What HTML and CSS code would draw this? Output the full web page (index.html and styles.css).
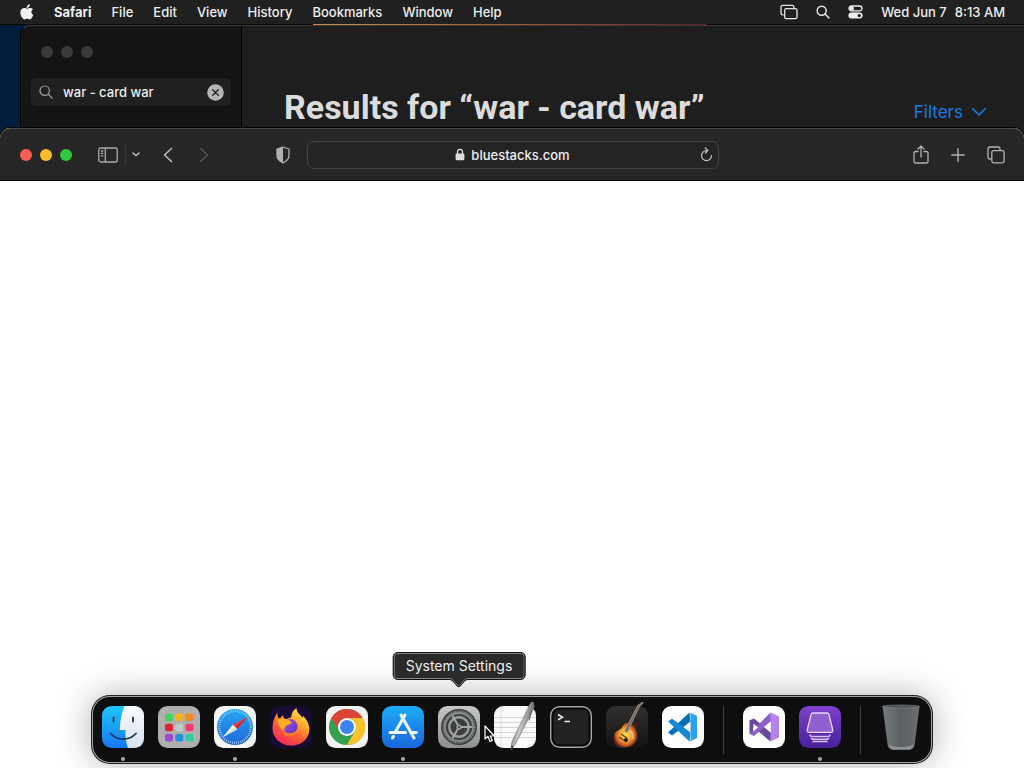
FILE: index.html
```html
<!DOCTYPE html>
<html lang="en">
<head>
<meta charset="utf-8">
<meta name="viewport" content="width=device-width, initial-scale=1">
<title>bluestacks.com</title>
<link rel="stylesheet" href="styles.css">
</head>
<body>
<div class="desktop">
  <header class="menubar">
    <nav class="menus" aria-label="Menu bar">
      <button class="menu apple" aria-label="Apple">
        <svg width="14" height="16" viewBox="0 0 14 16"><path fill="#f0f0f0" d="M9.9 0.2c.1 1-.3 1.900-.9 2.600-.6.700-1.500 1.200-2.400 1.100-.1-.9.400-1.900.9-2.500C8.100.700 9.100.200 9.900.200zM12.900 5.400c-.9.600-1.500 1.400-1.500 2.500 0 1.300.8 2.400 2 2.900-.3.900-.7 1.700-1.200 2.500-.7 1-1.400 2.100-2.500 2.100-1 0-1.400-.6-2.600-.6s-1.600.6-2.600.6c-1.100 0-1.900-1.100-2.600-2.100C.5 11.300-.3 7.700 1.300 5.600c.7-1 1.800-1.600 3-1.600 1.200 0 2 .7 2.900.7s1.500-.7 2.900-.7c1.100 0 2.100.5 2.800 1.400z"/></svg>
      </button>
      <button class="menu current">Safari</button>
      <button class="menu">File</button>
      <button class="menu">Edit</button>
      <button class="menu">View</button>
      <button class="menu">History</button>
      <button class="menu">Bookmarks</button>
      <button class="menu">Window</button>
      <button class="menu">Help</button>
    </nav>
    <div class="status">
      <button class="menu" aria-label="Stage Manager">
        <svg width="18" height="16" viewBox="0 0 18 16" fill="none" stroke="#e6e6e6" stroke-width="1.300"><path d="M3.600 10.800H2.700A1.700 1.700 0 0 1 1 9.100V3a1.700 1.700 0 0 1 1.700-1.700h9.500A1.700 1.700 0 0 1 13.900 3v1"/><rect x="4.700" y="4.600" width="12.300" height="10" rx="1.700"/></svg>
      </button>
      <button class="menu" aria-label="Spotlight">
        <svg width="14" height="14" viewBox="0 0 14 14" fill="none" stroke="#e6e6e6" stroke-width="1.500" stroke-linecap="round"><circle cx="5.700" cy="5.700" r="4.500"/><path d="M9 9l4 4"/></svg>
      </button>
      <button class="menu" aria-label="Control Center">
        <svg width="15" height="14" viewBox="0 0 15 14"><rect x="1" y="1" width="13" height="4.800" rx="2.400" fill="none" stroke="#eee" stroke-width="1.300"/><circle cx="3.800" cy="3.400" r="2.200" fill="#eee"/><rect x=".4" y="7.600" width="14.200" height="6" rx="3" fill="#eee"/><circle cx="11.300" cy="10.600" r="1.700" fill="#222"/></svg>
      </button>
      <time class="clock" datetime="2023-06-07T08:13"><span>Wed Jun 7</span><span>8:13 AM</span></time>
    </div>
  </header>

  <section class="store" aria-label="App Store">
    <aside class="store-side">
      <div class="lights idle"><i></i><i></i><i></i></div>
      <div class="search">
        <svg width="14" height="14" viewBox="0 0 14 14" fill="none" stroke="#a0a0a0" stroke-width="1.200" stroke-linecap="round"><circle cx="5.700" cy="5.700" r="4.700"/><path d="M9.200 9.200l4 4"/></svg>
        <input type="text" value="war - card war" aria-label="Search">
        <button class="clear" aria-label="Clear search">
          <svg width="17" height="17" viewBox="0 0 17 17"><circle cx="8.500" cy="8.500" r="8.300" fill="#b4b4b4"/><path d="M5.700 5.700l5.600 5.600M11.300 5.700l-5.600 5.600" stroke="#1c1c1c" stroke-width="1.300" stroke-linecap="round"/></svg>
        </button>
      </div>
    </aside>
    <div class="store-main">
      <h1>Results for “war - card war”</h1>
      <button class="filters">Filters
        <svg width="16" height="10" viewBox="0 0 16 10" fill="none" stroke="#1a7be8" stroke-width="1.600" stroke-linecap="round" stroke-linejoin="round"><path d="M1.500 1.500L8 8l6.500-6.500"/></svg>
      </button>
    </div>
  </section>

  <main class="browser">
    <div class="toolbar">
      <div class="tools">
        <div class="lights"><i class="red"></i><i class="yellow"></i><i class="green"></i></div>
        <div class="sidebar-tools">
          <button aria-label="Show sidebar">
            <svg width="20" height="16" viewBox="0 0 20 16" fill="none" stroke="#aaa" stroke-width="1.300"><rect x=".8" y="1" width="18.400" height="14" rx="2"/><path d="M7.300 1v14M2.800 4h2.500M2.800 6.400h2.500M2.800 8.800h2.500"/></svg>
          </button>
          <button class="chooser" aria-label="Tab groups">
            <svg width="8" height="5" viewBox="0 0 8 5" fill="none" stroke="#c4c4c4" stroke-width="1.500" stroke-linecap="round" stroke-linejoin="round"><path d="M1 1l3 2.500L7 1"/></svg>
          </button>
        </div>
        <div class="history">
          <button aria-label="Back"><svg width="10" height="16" viewBox="0 0 10 16" fill="none" stroke="#c0c0c0" stroke-width="1.500" stroke-linecap="round" stroke-linejoin="round"><path d="M8.500 1.500L1.500 8l7 6.500"/></svg></button>
          <button aria-label="Forward" disabled><svg width="10" height="16" viewBox="0 0 10 16" fill="none" stroke="#545454" stroke-width="1.500" stroke-linecap="round" stroke-linejoin="round"><path d="M1.500 1.500l7 6.500-7 6.500"/></svg></button>
        </div>
        <button class="shield" aria-label="Privacy report">
          <svg width="16" height="18" viewBox="0 0 16 18"><path d="M8 1l6 2v6.500c0 3.500-2.500 5.600-6 7.300-3.500-1.700-6-3.800-6-7.300V3z" fill="none" stroke="#b0b0b0" stroke-width="1.300" stroke-linejoin="round"/><path d="M8 1L2 3v6.500c0 3.500 2.500 5.600 6 7.300z" fill="#b0b0b0"/></svg>
        </button>
      </div>
      <div class="address">
        <button class="site">
          <svg width="10" height="13" viewBox="0 0 10 13"><path d="M2.500 6V3.800a2.500 2.500 0 0 1 5 0V6" fill="none" stroke="#ddd" stroke-width="1.300"/><rect x=".6" y="5.400" width="8.800" height="6.800" rx="1.200" fill="#ddd"/></svg>
          bluestacks.com
        </button>
        <button class="reload" aria-label="Reload">
          <svg width="14" height="15" viewBox="0 0 14 15" fill="none" stroke="#c0c0c0" stroke-width="1.200" stroke-linecap="round" stroke-linejoin="round"><path d="M8.500 3.600H7.500A5 5 0 1 0 12.500 8.600M6.300 1l2.600 2.600-2.600 2.600"/></svg>
        </button>
      </div>
      <div class="tools end">
        <button aria-label="Share"><svg width="16" height="20" viewBox="0 0 16 20" fill="none" stroke="#b2b2b2" stroke-width="1.300" stroke-linecap="round" stroke-linejoin="round"><path d="M5 6.500H2.500a1.500 1.500 0 0 0-1.500 1.500v8.500A1.500 1.500 0 0 0 2.500 18h11a1.500 1.500 0 0 0 1.500-1.500V8a1.500 1.500 0 0 0-1.500-1.500H11M8 12V1.200M5 4l3-3 3 3"/></svg></button>
        <button aria-label="New tab"><svg width="14" height="14" viewBox="0 0 14 14" stroke="#b2b2b2" stroke-width="1.400" stroke-linecap="round"><path d="M7 .8v12.400M.8 7h12.400"/></svg></button>
        <button aria-label="Show tabs"><svg width="18" height="18" viewBox="0 0 18 18" fill="none" stroke="#b2b2b2" stroke-width="1.300"><path d="M4.500 13H2.800A1.800 1.800 0 0 1 1 11.200V2.800A1.800 1.800 0 0 1 2.800 1h8.400A1.800 1.800 0 0 1 13 2.800v1.700"/><rect x="4.800" y="4.600" width="12.300" height="12.300" rx="1.800"/></svg></button>
      </div>
    </div>
    <div class="page"></div>
  </main>

  <nav class="dock" aria-label="Dock">
    <button class="app running" aria-label="Finder">
      <svg viewBox="0 0 42 42"><defs><linearGradient id="fb" x2="0" y2="1"><stop stop-color="#20c7fb"/><stop offset="1" stop-color="#1677f3"/></linearGradient><linearGradient id="fw" x2="0" y2="1"><stop stop-color="#fafafc"/><stop offset="1" stop-color="#d9e1ee"/></linearGradient><clipPath id="tile"><rect width="42" height="42" rx="9.500"/></clipPath></defs><g clip-path="url(#tile)"><path fill="url(#fb)" d="M0 0h42v42H0z"/><path fill="url(#fw)" d="M42 0H22.500C19.500 7 18 15 17.800 24h5.700c-.4 6 .3 12 2.500 18h16z"/></g><path d="M11.500 11.500v4M31 11.500v4" stroke="#153250" stroke-width="1.800" stroke-linecap="round"/><path d="M8.500 27.500c7 7.500 18.500 7.500 25.500 0" fill="none" stroke="#183a5c" stroke-width="1.800" stroke-linecap="round"/></svg>
    </button>
    <button class="app" aria-label="Launchpad">
      <svg viewBox="0 0 42 42"><rect width="42" height="42" rx="9.500" fill="#afafaf"/><rect x="7" y="7.500" width="8" height="7.500" rx="1.800" fill="#48d258"/><rect x="17.300" y="7.500" width="8" height="7.500" rx="1.800" fill="#f7b321"/><rect x="27.500" y="7.500" width="8" height="7.500" rx="1.800" fill="#f28a22"/><rect x="7" y="17.700" width="8" height="7.500" rx="1.800" fill="#dc2536"/><rect x="17.300" y="17.700" width="8" height="7.500" rx="1.800" fill="#b9ccc9"/><rect x="27.500" y="17.700" width="8" height="7.500" rx="1.800" fill="#f43b72"/><rect x="7" y="28" width="8" height="7.500" rx="1.800" fill="#9e48d0"/><rect x="17.300" y="28" width="8" height="7.500" rx="1.800" fill="#258fdf"/><rect x="27.500" y="28" width="8" height="7.500" rx="1.800" fill="#36c9a6"/></svg>
    </button>
    <button class="app running" aria-label="Safari">
      <svg viewBox="0 0 42 42"><defs><linearGradient id="sf" x2="0" y2="1"><stop stop-color="#25a8f4"/><stop offset="1" stop-color="#2167d8"/></linearGradient></defs><rect width="42" height="42" rx="9.500" fill="#f5f5f5"/><circle cx="21" cy="21" r="18" fill="url(#sf)"/><circle cx="21" cy="21" r="15.800" fill="none" stroke="#c9e4fb" stroke-width="2" stroke-dasharray=".7 1.368"/><path fill="#f13c3a" d="M33.500 11L18.800 18.800l4.400 4.400z"/><path fill="#c22f3a" d="M33.500 11L21 21l2.200 2.200z"/><path fill="#fff" d="M8.800 31.200L18.800 18.800l4.400 4.400z"/><path fill="#d4dbe4" d="M8.800 31.200L21 21l2.200 2.200z"/></svg>
    </button>
    <button class="app" aria-label="Firefox">
      <svg viewBox="0 0 42 42"><defs><linearGradient id="ff" x1=".85" y1="0" x2=".25" y2="1"><stop stop-color="#fff04c"/><stop offset=".35" stop-color="#ffac28"/><stop offset=".65" stop-color="#ff5a38"/><stop offset="1" stop-color="#ee2664"/></linearGradient><linearGradient id="ff2" x2="1" y2="1"><stop stop-color="#b050ec"/><stop offset="1" stop-color="#5436b4"/></linearGradient></defs><rect width="42" height="42" rx="9.500" fill="#1a0b35"/><path fill="url(#ff)" d="M7.500 6.500c-.3 2.500.1 4 .9 5.500l1.800.2L13 9c.2 2.500 1 3.900 2.800 4.600 1.600-1.300 3.200-2 5.200-2.200.6-4.300 2.400-7.500 5.500-9.400.2 4.200 2.400 5.800 4.500 7.800l1.500 2 .5-2c5.700 5.700 8 12.700 5.300 19.100C35.600 35.500 29 39.500 21 39.500 10.500 39.500 2.500 32 2.500 22c0-6 2-11.700 5-15.500z"/><circle cx="20" cy="20.500" r="7.500" fill="url(#ff2)"/><path fill="#ffac24" d="M8 13c3.200-1.100 8.700-.8 11.400 1.400l2.400 1.700c-1.500 3-4.500 2.700-5.800 4-1.800 1.700-1.700 3.200-1.700 5.200-3.500-2.500-7.200-6-6.300-12.300z"/><path fill="#ff7b2d" d="M14.300 25.300c4 3.200 9.900 2.400 12.700-1.300-1.200 6-8.500 8.300-13.500 4.500z"/></svg>
    </button>
    <button class="app" aria-label="Chrome">
      <svg viewBox="0 0 42 42"><rect width="42" height="42" rx="9.500" fill="#f4f2f0"/><circle cx="21" cy="21" r="18" fill="#34a04f"/><path fill="#dc4437" d="M5.400 12A18 18 0 0 1 36.600 12H21a9 9 0 0 0-7.800 13.500z"/><path fill="#fbc22c" d="M36.600 12A18 18 0 0 1 21 39l7.800-13.500A9 9 0 0 0 21 12z"/><circle cx="21" cy="21" r="9" fill="#fff"/><circle cx="21" cy="21" r="7" fill="#3e82ed"/></svg>
    </button>
    <button class="app running" aria-label="App Store">
      <svg viewBox="0 0 42 42"><defs><linearGradient id="as" x2="0" y2="1"><stop stop-color="#1dacfa"/><stop offset="1" stop-color="#1967dc"/></linearGradient></defs><rect width="42" height="42" rx="9.500" fill="url(#as)"/><g fill="none" stroke="#f3faff" stroke-width="3" stroke-linecap="round"><path d="M23 9L13 26.500M19 9l13 23M8 26.500h15.500M29 26.500h5.500M11.500 30.300L10.500 32"/></g></svg>
    </button>
    <button class="app" aria-label="System Settings" aria-describedby="tip">
      <svg viewBox="0 0 42 42"><defs><linearGradient id="ss" x2="0" y2="1"><stop stop-color="#c6c8c6"/><stop offset="1" stop-color="#8c8e8d"/></linearGradient></defs><rect width="42" height="42" rx="9.500" fill="url(#ss)"/><circle cx="21" cy="21" r="18" fill="#3c3e40"/><circle cx="21" cy="21" r="15.600" fill="none" stroke="#858788" stroke-width="2" stroke-dasharray="1.200 .760"/><circle cx="21" cy="21" r="14" fill="none" stroke="#8b8d8e" stroke-width="1.800"/><circle cx="21" cy="21" r="9.700" fill="none" stroke="#9a9c9c" stroke-width="2.400"/><path d="M21 21h13M21 21l-6.500-11.300M21 21l-6.500 11.300" stroke="#a6a8a8" stroke-width="2"/><circle cx="21" cy="21" r="2.600" fill="#a2a4a4"/><circle cx="21" cy="21" r="1.100" fill="#414345"/></svg>
      <span class="tooltip" id="tip" role="tooltip">System Settings
        <svg class="tip-arrow" width="20" height="10" viewBox="0 0 20 10"><path d="M0 0c4 0 5 3 7 5.500 1.500 2 2 2.500 3 2.500s1.500-.5 3-2.500C15 3 16 0 20 0z" fill="#2a2a2a"/><path d="M1 1c3.500 0 4.500 2.500 6.500 5 1.200 1.700 1.700 2.200 2.500 2.200s1.300-.5 2.500-2.200c2-2.500 3-5 6.500-5" fill="none" stroke="#111" stroke-width="2"/><path d="M0 .5c4 0 5 2 7 4.500 1.500 2 2 2.500 3 2.500s1.500-.5 3-2.500c2-2.500 3-4.500 7-4.500" fill="none" stroke="#888"/></svg>
      </span>
    </button>
    <button class="app" aria-label="TextEdit">
      <svg viewBox="0 0 42 42"><defs><linearGradient id="pen" x2="1" y2=".3"><stop stop-color="#5f6262"/><stop offset=".5" stop-color="#c7c9c9"/><stop offset="1" stop-color="#666"/></linearGradient></defs><rect width="42" height="42" rx="9.500" fill="#fafafa"/><path d="M0 11.500h42M0 16.500h42M0 21.500h42M0 26.500h42M0 31.500h42" stroke="#cbcbd0" stroke-width=".8"/><path d="M7 0v42" stroke="#e9c6c6" stroke-width=".7"/><path d="M36.500-3l2-1.300 1 .8.300 2.500c.7 1 .4 2-.3 3.500L21.500 38 17 43.500 17.800 36 35 0z" fill="url(#pen)" stroke="#6b6e6e" stroke-width=".6"/><path d="M38 4L35 14.500" stroke="#555" stroke-width="1"/><path d="M17 43.500l.5-4 2.200 1z" fill="#333"/></svg>
    </button>
    <button class="app" aria-label="Terminal">
      <svg viewBox="0 0 42 42"><rect x=".7" y=".7" width="40.600" height="40.600" rx="9" fill="#070707" stroke="#a6a6a6" stroke-width="1.400"/><rect x="3.500" y="3.500" width="35" height="35" rx="6.500" fill="#222"/><path d="M8 8.500l4.500 2.700L8 13.900M14.500 15.500h5.500" fill="none" stroke="#f2f2f2" stroke-width="1.500"/></svg>
    </button>
    <button class="app" aria-label="GarageBand">
      <svg viewBox="0 0 42 42"><defs><radialGradient id="gb"><stop stop-color="#ffe457"/><stop offset=".5" stop-color="#f0a437"/><stop offset=".8" stop-color="#c45b27"/><stop offset="1" stop-color="#4c1d15"/></radialGradient><linearGradient id="gt" x2="0" y2="1"><stop stop-color="#303030"/><stop offset="1" stop-color="#121212"/></linearGradient></defs><rect width="42" height="42" rx="9.500" fill="url(#gt)"/><path d="M8 30c0-5 5-5 7.500-8 2-3 4-6.500 7-6 1.500.5 0 3 1.500 3.500 2 .5 5-4.500 7-3.500s-.8 4-1.200 6.500c1 4.500 3 7.500 1.200 12-3 7.500-16 9.500-21 5.500C7.500 38 6.500 34 8 30z" fill="url(#gb)"/><path d="M18.500 25L32-1l5-2.800-.5 1.800-3 2.300L21 27z" fill="#75675c" stroke="#c5b6a7" stroke-width=".6"/><path d="M15 28l6 4M13 31l6 4" stroke="#704018" stroke-width="1.500"/><circle cx="20" cy="34" r="2" fill="#271c17"/><path d="M24 25c2 1 4 4 3 8" fill="none" stroke="#eee0b2" stroke-width="1.200"/></svg>
    </button>
    <button class="app" aria-label="Visual Studio Code">
      <svg viewBox="0 0 42 42"><rect width="42" height="42" rx="9.500" fill="#fff"/><path fill="#0670b8" d="M27.500 6.500l1 9L10 29.500 6 26.500z"/><path fill="#1688d1" d="M6 15.500l4-3L28.500 26.500l-1 9z"/><path fill="#2ba2f1" d="M27.500 6.500l6.300 2.800c1 .5 1.200 1 1.200 2v19.400c0 1-.2 1.500-1.200 2l-6.300 2.800c.8-1 1-1.500 1-3v-23c0-1-.2-2-1-3z"/></svg>
    </button>
    <span class="divider"></span>
    <button class="app" aria-label="Visual Studio">
      <svg viewBox="0 0 42 42"><rect width="42" height="42" rx="9.500" fill="#fff"/><path fill="#68499b" d="M6.500 14.500L11 12.500 28.500 27l-1 8.500L10 21v-4z"/><path fill="#68499b" d="M6.500 14.500L10 13.500v16l-3.500-2z"/><path fill="#8b60c8" d="M6.500 27.500L27.500 6.500l1 8.500L11 30z"/><path fill="#fff" d="M10.500 17.500v8l4.500-4z"/><path fill="#b284ec" d="M27.500 6.500L36 10.500v21l-8.500 4z"/><path fill="#fff" d="M27.800 15.500v11l-6.800-5.500z"/></svg>
    </button>
    <button class="app running" aria-label="Drive manager">
      <svg viewBox="0 0 42 42"><defs><linearGradient id="pr" x2="0" y2="1"><stop stop-color="#8042ce"/><stop offset="1" stop-color="#45219b"/></linearGradient></defs><rect width="42" height="42" rx="9.500" fill="url(#pr)"/><path d="M14 7h14c1.300 0 1.800.8 2 1.800l3.800 15c.3 1.500-.4 2.500-2 2.500H10.200c-1.600 0-2.300-1-2-2.500L12 8.800c.2-1 .7-1.800 2-1.800z" fill="#9060cf" stroke="#e7d7ff" stroke-width="1.300"/><path d="M11 29.200c.3 1 1 1.200 2 1.200h16c1 0 1.700-.2 2-1.200M12.500 32.400c.3.700 1 .9 1.500.9h14c.5 0 1.200-.2 1.500-.9M14 35.500h14" fill="none" stroke="#d9c1f4" stroke-width="1.500" stroke-linecap="round"/></svg>
    </button>
    <span class="divider"></span>
    <button class="app" aria-label="Trash">
      <svg viewBox="0 0 42 42"><defs><linearGradient id="tr" x2="1" y2="0"><stop stop-color="#74797c"/><stop offset=".5" stop-color="#5b6063"/><stop offset="1" stop-color="#6b6f71"/></linearGradient></defs><path d="M2.500 0h37L34.800 38c-.4 3.500-2.500 6-6 6H13.500c-3.500 0-5.600-2.500-6-6z" fill="url(#tr)"/><ellipse cx="21" cy=".5" rx="18.500" ry="1.500" fill="#4c5052" stroke="#8a8e8f" stroke-width=".6"/><path d="M8.200 38c3 4 22.600 4 25.600 0-.8 4-3 5.500-6 5.500H14.500c-3 0-5.500-1.500-6.300-5.500z" fill="#8e9395"/></svg>
    </button>
  </nav>
  <svg class="cursor" width="12" height="18" viewBox="0 0 12 18"><path d="M1 1v13l3-2.700L6 16.500l2.300-1-2-4.500h4z" fill="#111" stroke="#fff" stroke-width="1.200" stroke-linejoin="round"/></svg>
</div>
</body>
</html>
```
FILE: styles.css
```css
* { box-sizing: border-box; }

body {
  margin: 0;
  font-family: Inter, "Liberation Sans", sans-serif;
  font-size: 13px;
  color: #eee;
}

button {
  display: flex;
  align-items: center;
  margin: 0;
  padding: 0;
  border: 0;
  background: none;
  color: inherit;
  font: inherit;
}

svg { display: block; flex: none; overflow: visible; }

.desktop {
  position: relative;
  display: flex;
  flex-direction: column;
  height: 100vh;
  min-height: 400px;
  overflow: hidden;
  background: #001e3c;
}

/* Menu bar */
.menubar {
  display: flex;
  justify-content: space-between;
  height: 25px;
  flex: none;
  padding: 0 19px 1px 20px;
  background: #202020;
  border-bottom: 1px solid #080808;
  border-image: linear-gradient(90deg, #080808 30.600%, #c0914a 30.600%, #a05c34 50%, #5c2028 69%, #080808 69%) 1;
  font-weight: 500;
}
.menus, .status { display: flex; align-items: center; white-space: nowrap; }
.menus { gap: 20px; }
.current { font-weight: 700; }
.status { gap: 18px; }
.clock { display: flex; gap: 8px; }

/* App Store window */
.store {
  display: flex;
  flex: none;
  height: 113px;
  margin-left: 20px;
  border-top: 1px solid #3a3a3a;
  border-left: 1px solid #000;
  border-top-left-radius: 10px;
  background: #1e1e1e;
}
.store-side {
  width: 221px;
  flex: none;
  padding: 20px 10px 0;
  border-right: 1px solid #000;
  border-top-left-radius: 10px;
  background: #141414;
}
.lights { display: flex; gap: 8px; }
.lights i { width: 12px; height: 12px; border-radius: 50%; background: #3a3a3a; }
.lights .red { background: #fc5b54; }
.lights .yellow { background: #fcbb2c; }
.lights .green { background: #2bc840; }
.idle { padding-left: 10px; }
.search {
  display: flex;
  align-items: center;
  gap: 10px;
  height: 28px;
  margin-top: 20px;
  padding: 0 7px 0 8px;
  border-radius: 5px;
  background: #202020;
}
.search input {
  flex: 1;
  min-width: 0;
  padding: 0;
  border: 0;
  outline: 0;
  background: none;
  color: #eee;
  font: inherit;
  font-weight: 500;
}
.store-main {
  display: flex;
  flex: 1;
  align-items: flex-end;
  justify-content: space-between;
  padding: 0 37px 11px 42px;
  white-space: nowrap;
}
.store-main h1 {
  margin: 0;
  color: #dcdcdc;
  font-family: Roboto, Inter, sans-serif;
  font-size: 34px;
  line-height: 40px;
  font-weight: 700;
}
.filters { gap: 8px; color: #1a7be8; font-size: 17px; line-height: 30px; }

/* Browser window, overlapping the lower edge of the one behind */
.browser {
  position: relative;
  display: flex;
  flex: 1;
  flex-direction: column;
  margin-top: -10px;
  border-radius: 10px 10px 0 0;
  background: #fff;
  box-shadow: 0 0 0 1px #000;
}
.toolbar {
  display: grid;
  grid-template-columns: 1fr 412px 1fr;
  align-items: center;
  height: 53px;
  flex: none;
  padding: 0 19px 0 20px;
  border-top: 1px solid #494949;
  border-bottom: 1px solid #000;
  border-radius: 10px 10px 0 0;
  background: #262626;
}
.tools { display: flex; align-items: center; }
.sidebar-tools { display: flex; align-items: center; margin-left: 26px; }
.chooser { height: 20px; margin-left: 7px; padding-left: 6px; border-left: 1px solid #383838; }
.history { display: flex; gap: 26px; margin-left: 23px; }
.shield { margin: 0 16px 0 auto; }
.address {
  display: grid;
  grid-template-columns: 1fr auto 1fr;
  align-items: center;
  height: 28px;
  padding: 0 5px;
  border: 1px solid #434343;
  border-radius: 7px;
  background: #242424;
}
.site { grid-column: 2; gap: 6px; font-weight: 500; }
.reload { justify-self: end; }
.end { justify-content: flex-end; gap: 22px; }
.page { flex: 1; }

/* Dock */
.dock {
  position: absolute;
  bottom: 5px;
  left: 50%;
  display: flex;
  align-items: flex-start;
  gap: 14px;
  height: 67px;
  padding: 10px;
  border-radius: 18px;
  background: #0e0e0e;
  box-shadow: inset 0 0 0 1px #a2a2a2, 0 0 0 1px #222, 0 0 34px rgba(0, 0, 0, .32);
  transform: translateX(-50%);
}
.app { position: relative; width: 42px; height: 42px; }
.app > svg { width: 42px; height: 42px; }
.running::after {
  content: "";
  position: absolute;
  top: 51px;
  left: 19px;
  width: 4px;
  height: 4px;
  border-radius: 50%;
  background: #aaa;
}
.divider { width: 1px; height: 48px; margin: 0 5px; background: #414141; }
.tooltip {
  position: absolute;
  bottom: 68px;
  left: 50%;
  padding: 0 12px;
  border: 1px solid #111;
  border-radius: 5px;
  background: #2a2a2a;
  box-shadow: inset 0 0 0 1px #858585;
  font-size: 14px;
  line-height: 26px;
  white-space: nowrap;
  transform: translateX(-50%);
}
.tip-arrow { position: absolute; top: 100%; left: calc(50% - 10px); margin-top: -1px; }
.cursor { position: absolute; left: 484px; bottom: 25px; }
```
